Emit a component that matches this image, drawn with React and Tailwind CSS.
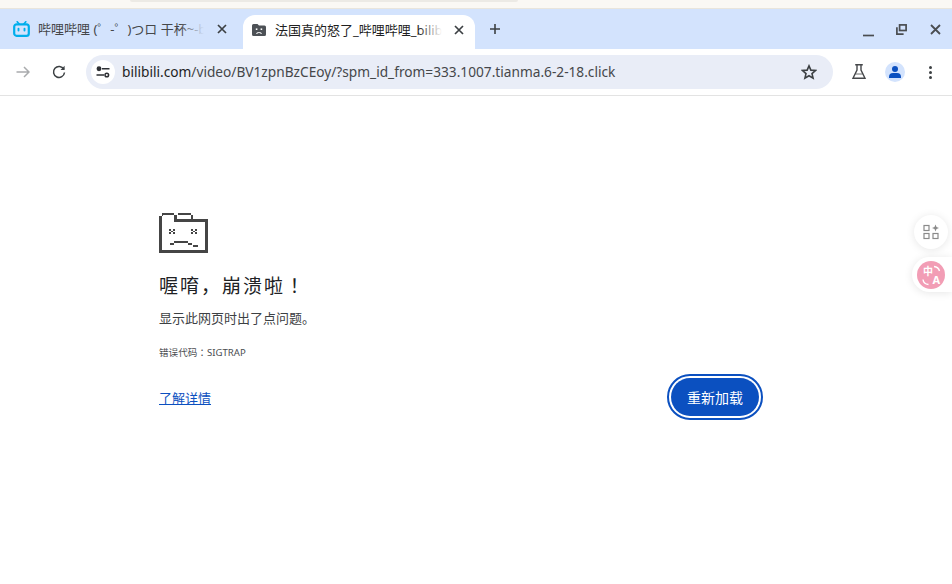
import React from "react";

const F = { fontFamily: '"Noto Sans", "Noto Sans CJK JP", sans-serif' };

function X({ className = "" }) {
  return (
    <svg width="10" height="10" viewBox="0 0 10 10" className={className}>
      <path d="M1 1L9 9M9 1L1 9" stroke="#3c4043" strokeWidth="1.7" />
    </svg>
  );
}

function Bili() {
  return (
    <svg width="17" height="16" viewBox="0 0 17 16">
      <path d="M4.2 0.8L6.2 3M12.8 0.8L10.8 3" stroke="#00aeec" strokeWidth="1.7" strokeLinecap="round" />
      <rect x="1.2" y="3.4" width="14.6" height="11.4" rx="2.4" fill="none" stroke="#00aeec" strokeWidth="2.2" />
      <path d="M5.5 7.6v2M11.5 7.6v2" stroke="#00aeec" strokeWidth="1.9" strokeLinecap="round" />
    </svg>
  );
}

function SadTab() {
  return (
    <svg width="14" height="12" viewBox="0 0 14 12">
      <path d="M0 1.5Q0 0 1.5 0H5.5L7 1.5H12.5Q14 1.5 14 3V10.5Q14 12 12.5 12H1.5Q0 12 0 10.5Z" fill="#4d5156" />
      <rect x="3.8" y="4.4" width="1.6" height="1.6" fill="#fff" />
      <rect x="8.6" y="4.4" width="1.6" height="1.6" fill="#fff" />
      <path d="M4.2 9.4H5.4V8.6H8.6V9.4H9.8" stroke="#fff" strokeWidth="0.9" fill="none" />
    </svg>
  );
}

function SadFolder() {
  return (
    <svg width="49" height="40" viewBox="0 0 49 40" shapeRendering="crispEdges" className="block">
      <path
        fill="#454545"
        d="M3 0h12v2H3zM19 0h13v2H19zM0 3h3v37H0zM3 2h1v1H3zM3 37h43v3H3zM46 6h3v34h-3zM15 2h3v7h-3zM18 6h28v3H18zM32 2h2v4h-2z"
      />
      <path
        fill="#454545"
        d="M10 16h2v2h-2zM14 16h2v2h-2zM12 18h2v1h-2zM10 19h2v2h-2zM14 19h2v2h-2zM32 16h2v2h-2zM36 16h2v2h-2zM34 18h2v1h-2zM32 19h2v2h-2zM36 19h2v2h-2zM11 30h4v2h-4zM15 28h14v2H15zM29 30h4v2h-4zM34 32h5v2h-5z"
      />
    </svg>
  );
}

function TuneIcon() {
  return (
    <svg width="14" height="12" viewBox="0 0 14 12" fill="none" stroke="#2d2f33" strokeWidth="1.5">
      <circle cx="3" cy="2.8" r="1.7" fill="#2d2f33" />
      <path d="M6 2.8H13.5M0.5 9H8" />
      <circle cx="10.8" cy="9" r="1.8" />
    </svg>
  );
}

export default function App() {
  return (
    <div className="w-[952px] h-[584px] bg-white overflow-hidden flex flex-col relative" style={F}>
      <div className="h-[9px] bg-[#faf8f4] border-b border-[#e9e5dc] shrink-0">
        <div className="ml-[130px] w-[388px] h-[2px] bg-[#eceae5] rounded-b-md" />
      </div>

      <div className="h-[40px] bg-[#d3e3fd] flex items-end shrink-0">
        <div className="w-[243px] h-[40px] flex items-center pl-[13px] pr-[16px] pb-[1px] shrink-0">
          <Bili />
          <span className="ml-[8px] w-[166px] overflow-hidden whitespace-nowrap text-[13px] leading-[16px] text-[#45474a] relative">
            哔哩哔哩 (゜-゜)つロ 干杯~-bilibili
            <span className="absolute right-0 top-0 bottom-0 w-[24px] bg-gradient-to-r from-transparent to-[#d3e3fd]" />
          </span>
          <X className="ml-auto" />
        </div>
        <div className="w-[232px] h-[34px] bg-white rounded-t-[12px] flex items-center pl-[9px] pr-[11px] pb-[4px] shrink-0 relative">
          <SadTab />
          <span className="ml-[9px] w-[167px] overflow-hidden whitespace-nowrap text-[13px] leading-[16px] text-[#1f1f1f] relative">
            法国真的怒了_哔哩哔哩_bilibili
            <span className="absolute right-0 top-0 bottom-0 w-[24px] bg-gradient-to-r from-transparent to-white" />
          </span>
          <X className="ml-auto" />
        </div>
        <div className="h-[40px] flex items-center pl-[14px]">
          <svg width="12" height="12" viewBox="0 0 12 12">
            <path d="M6 1V11M1 6H11" stroke="#3c4043" strokeWidth="1.6" />
          </svg>
        </div>
        <div className="h-[40px] ml-auto flex items-center pr-[11px] gap-[21px]">
          <svg width="11" height="10" viewBox="0 0 11 10" className="mt-[5px] mr-[1px]">
            <path d="M0 8.5H11" stroke="#4a4d51" strokeWidth="1.7" />
          </svg>
          <svg width="11" height="11" viewBox="0 0 11 11" fill="none" stroke="#4a4d51" strokeWidth="1.7">
            <rect x="3.6" y="0.9" width="6.5" height="5.6" />
            <path d="M0.9 3.2V10.1H7.6" />
          </svg>
          <svg width="11" height="11" viewBox="0 0 11 11" className="ml-[2px]">
            <path d="M1 1L10 10M10 1L1 10" stroke="#4a4d51" strokeWidth="1.8" />
          </svg>
        </div>
      </div>

      <div className="h-[47px] bg-white border-b border-[#e3e3e3] flex items-center shrink-0">
        <svg width="14" height="12" viewBox="0 0 14 12" className="ml-[16px]" fill="none" stroke="#a9abad" strokeWidth="1.5">
          <path d="M0.5 6H13M8 1L13 6L8 11" />
        </svg>
        <svg width="14" height="14" viewBox="0 0 14 14" className="ml-[22px]" fill="none" stroke="#3c4043" strokeWidth="1.5">
          <path d="M11.8 4.2A5.5 5.5 0 1 0 12.5 7.5" />
          <path d="M12.6 0.8V5H8.5Z" fill="#3c4043" stroke="none" />
        </svg>
        <div className="ml-[20px] w-[747px] h-[34px] rounded-full bg-[#e9edf7] flex items-center pl-[5px] pr-[16px]">
          <div className="w-[24px] h-[24px] rounded-full bg-white flex items-center justify-center">
            <TuneIcon />
          </div>
          <span className="ml-[7px] text-[13.7px] leading-none text-[#1f1f1f] whitespace-nowrap">
            bilibili.com<span className="text-[#45474a]">/video/BV1zpnBzCEoy/?spm_id_from=333.1007.tianma.6-2-18.click</span>
          </span>
          <svg width="16" height="16" viewBox="0 0 24 24" className="ml-auto" fill="none" stroke="#3c4043" strokeWidth="2.4" strokeLinejoin="miter">
            <path d="M12 2.8L14.8 9.2L21.8 9.8L16.5 14.4L18.1 21.2L12 17.6L5.9 21.2L7.5 14.4L2.2 9.8L9.2 9.2Z" />
          </svg>
        </div>
        <svg width="14" height="16" viewBox="0 0 14 16" className="ml-[19px]" fill="none" stroke="#45474a" strokeWidth="1.4">
          <path d="M3.2 0.8H10.8M5 1V6L1 14.2H13L9 6V1" />
          <path d="M3.4 10H10.6" strokeWidth="0.8" />
        </svg>
        <div className="ml-[19px] w-[20px] h-[20px] rounded-full bg-[#d3e3fd] flex flex-col items-center justify-center">
          <div className="w-[6px] h-[6px] rounded-full bg-[#0b50c0]" />
          <div className="w-[12px] h-[5px] mt-[1px] rounded-t-[4px] bg-[#0b50c0]" />
        </div>
        <div className="ml-[24px] flex flex-col gap-[2px]">
          <div className="w-[3px] h-[3px] rounded-full bg-[#3c4043]" />
          <div className="w-[3px] h-[3px] rounded-full bg-[#3c4043]" />
          <div className="w-[3px] h-[3px] rounded-full bg-[#3c4043]" />
        </div>
      </div>

      <div className="flex-1 pl-[159px] pt-[117px] flex flex-col items-start">
        <SadFolder />
        <h1 className="mt-[19px] text-[19px] leading-[28px] font-normal text-[#202124] tracking-[2px]">喔唷，崩溃啦！</h1>
        <p className="mt-[9px] text-[13px] leading-[18px] text-[#3c4043]">显示此网页时出了点问题。</p>
        <p className="mt-[19px] text-[9.6px] leading-[14px] text-[#4b4d50]">错误代码：SIGTRAP</p>
        <div className="mt-[18px] w-[600px] flex items-center justify-between">
          <a className="mt-[1px] text-[13px] leading-[18px] text-[#0b50c0] underline">了解详情</a>
          <button className="w-[88px] h-[38px] rounded-full bg-[#0b50c0] text-white text-[14px] outline outline-2 outline-offset-2 outline-[#0b50c0]">
            重新加载
          </button>
        </div>
      </div>

      <div className="absolute right-[4px] top-[215px] w-[34px] h-[34px] rounded-full bg-white shadow-[0_1px_8px_rgba(0,0,0,0.1)] flex items-center justify-center">
        <svg width="16" height="16" viewBox="0 0 16 16" fill="none" stroke="#8a8a8a" strokeWidth="1.2">
          <rect x="1" y="1.5" width="5" height="5" />
          <rect x="1" y="9.5" width="5" height="5" />
          <rect x="10" y="9.5" width="5" height="5" />
          <path d="M12.5 0.5L13.5 3L16 4L13.5 5L12.5 7.5L11.5 5L9 4L11.5 3Z" fill="#8a8a8a" stroke="none" />
        </svg>
      </div>
      <div className="absolute right-0 top-[257px] w-[40px] h-[35px] rounded-l-full bg-white shadow-[0_1px_8px_rgba(0,0,0,0.1)] flex items-center pl-[5px]">
        <div className="w-[28px] h-[28px] rounded-full bg-[#f29db5] relative overflow-hidden">
          <span className="absolute left-[6px] top-[5px] text-[10px] leading-[11px] font-bold text-white">中</span>
          <span className="absolute right-[5px] bottom-[4px] text-[11px] leading-[11px] font-bold text-white">A</span>
          <svg width="28" height="28" viewBox="0 0 28 28" className="absolute inset-0" fill="none" stroke="#fff" strokeWidth="1.4">
            <path d="M17 5.5Q21.5 6 22.5 10" />
            <path d="M6 18.5Q6.5 23 11.5 23.5" />
          </svg>
        </div>
      </div>
    </div>
  );
}
